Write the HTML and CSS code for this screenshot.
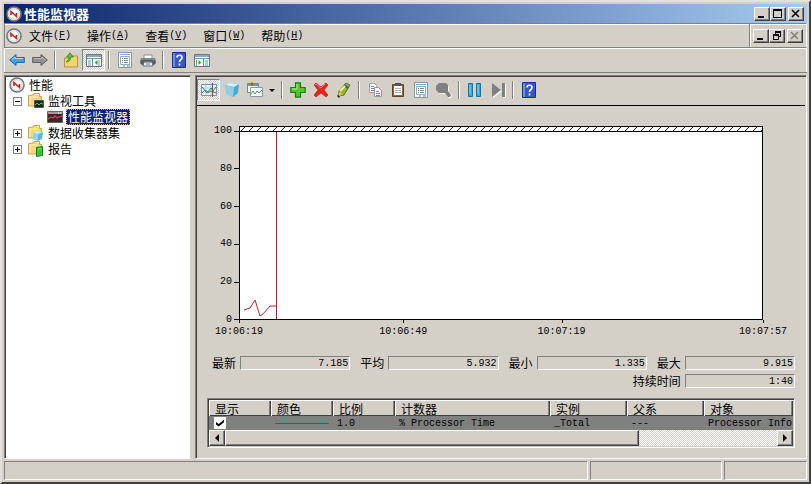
FILE: index.html
```html
<!DOCTYPE html>
<html lang="zh-CN">
<head>
<meta charset="utf-8">
<title>性能监视器</title>
<link rel="stylesheet" href="styles.css">
</head>
<body>
<svg class="sprite" aria-hidden="true">
  <symbol id="app" viewBox="0 0 16 16"><circle cx="8" cy="8" r="7" fill="#fff" stroke="#777" stroke-width="1.6"/><circle cx="8" cy="8" r="5.3" fill="none" stroke="#ccc"/><path d="M5 9V5.500l5.500 5V7" fill="none" stroke="#c8201c" stroke-width="1.6"/></symbol>
  <symbol id="back" viewBox="0 0 16 16"><path d="M.7 8 7 2.500V5.500h8.300v5H7v3z" fill="#39a5ec" stroke="#1c66a8"/><path d="M3 7.500 6 5v1.500h8" fill="none" stroke="#a7dcff"/></symbol>
  <symbol id="forward" viewBox="0 0 16 16"><path d="M15.300 8 9 2.500V5.500H.7v5H9v3z" fill="#929292" stroke="#5c5c5c"/><path d="M2 6.500h8V5l3 3" fill="none" stroke="#bbb"/></symbol>
  <symbol id="up" viewBox="0 0 16 16"><path d="M1.500 6h5l1-2h7v11h-13z" fill="#f5d471" stroke="#b8923b"/><path d="M3 10C6 10 8 8 8 5h2.500L7 .8 3.500 5H6C6 7 5 8.500 3 10z" fill="#55c32e" stroke="#28851b" stroke-width=".7"/></symbol>
  <symbol id="panel-left" viewBox="0 0 16 16"><path d="M.5 2.500h15v12H.5z" fill="#fff" stroke="#64788b"/><path d="M1 3h14v2H1z" fill="#8ea7bd"/><path d="M1 6.500h14M6.500 7v7M2 9h3M2 11h3M2 13h3M13 8v6" stroke="#7890a7"/><path d="m11.500 8-3 2.500 3 2.500z" fill="#38a333"/></symbol>
  <symbol id="panel-right" viewBox="0 0 16 16"><path d="M.5 2.500h15v12H.5z" fill="#fff" stroke="#64788b"/><path d="M1 3h14v2H1z" fill="#8ea7bd"/><path d="M1 6.500h14M9.500 7v7M11 9h3M11 11h3M11 13h3M2.500 8v6" stroke="#7890a7"/><path d="m4.500 8 3 2.500-3 2.500z" fill="#38a333"/></symbol>
  <symbol id="props" viewBox="0 0 16 16"><path d="M1.500.5h13v15h-13z" fill="#f7fbfd" stroke="#8b969e"/><path d="M3 2.500h10" stroke="#7cabc8"/><path d="M3.500 4.500h9v8h-9z" fill="#fff" stroke="#8eafc3"/><path d="M5 6.500h1m1 0h4M5 8.500h1m1 0h4M5 10.500h1m1 0h4M6 14h2m2 0h3" stroke="#758997"/></symbol>
  <symbol id="print" viewBox="0 0 16 16"><path d="M4 3h8v4H4z" fill="#fff" stroke="#8e8e8e"/><path d="M1 6h14l1 5-2 2H2l-2-2z" fill="#555e64"/><path d="M1 7h14" stroke="#a5acb0"/><path d="M4 10h8l1 4H3z" fill="#e7edf1" stroke="#65717a"/><path d="M6 12h4" stroke="#3c89bd"/><path d="M13 8h1" stroke="#6c6"/></symbol>
  <symbol id="help" viewBox="0 0 16 16"><path d="M1.500.5h13v15h-13z" fill="#3657c6" stroke="#1a3188"/><path d="M2 1h2v14H2z" fill="#6f8ee4"/><path d="M6 5.500C6 2.500 11 2.500 11 5.500 11 8 8.500 7.500 8.500 10M8.500 11.500v2" fill="none" stroke="#fff" stroke-width="1.700"/></symbol>
  <symbol id="folder" viewBox="0 0 16 16"><path d="M.5 2.500 5 2l1-1.500h5.500v3h2V13H.5z" fill="#f3d77c" stroke="#c7a54a"/><path d="M2 4h8M2 3v9" stroke="#fff2b8"/><path d="M9 1.500h2" stroke="#fff"/></symbol>
  <symbol id="tools" viewBox="0 0 16 16"><use href="#folder"/><path d="M6.500 7.500h9v7h-9z" fill="#192820" stroke="#4b5650"/><path d="m7 12 2-2 2 2 2-2 2 1" fill="none" stroke="#42cf4c"/></symbol>
  <symbol id="collector" viewBox="0 0 16 16"><use href="#folder"/><path d="m5 8 3-2 7 1-1 7-4 2-5-2z" fill="#62b8db"/><path d="m5 8 5 1 5-2-7-1z" fill="#c7f1ff"/><path d="m5 8 5 1v7l-5-2z" fill="#91d5ec"/></symbol>
  <symbol id="report" viewBox="0 0 16 16"><use href="#folder"/><path d="m8.500 6.500 6-1v9l-6 1z" fill="#35c938" stroke="#147d1a"/><path d="m10 8 3-.5" stroke="#92ef79"/></symbol>
  <symbol id="monitor" viewBox="0 0 16 16"><path d="M.5 2.500h15v11H.5z" fill="#3b2529" stroke="#62676b"/><path d="M1 3h14v2H1z" fill="#9ba0a4"/><path d="M11 4h1m1 0h1" stroke="#fff"/><path d="m1 10 3-2 2 1 2-2 2 2 2-1 3-1" fill="none" stroke="#ee3849" stroke-width="1.300"/></symbol>
  <symbol id="graph" viewBox="0 0 16 16"><path d="M.5 2.500h15v11H.5z" fill="#edf5f5" stroke="#7797ad"/><path d="M1 6h14M1 10h14M5 3v10M10 3v10" stroke="#b8c9d1"/><path d="m1 11 3-3 3 2 3-4 2 3 3-4" fill="none" stroke="#229947"/><path d="m1 5 5 6 4-2 5 2" fill="none" stroke="#4671bd"/><path d="M11.500 1v14" stroke="#c52d38"/></symbol>
  <symbol id="cube" viewBox="0 0 16 16"><path d="m1 3 4-2 10 1-1 9-5 4-6-3z" fill="#4ba8ca"/><path d="m1 3 4-2 10 1-5 3z" fill="#d2f4fc"/><path d="m1 3 9 2-1 10-6-3z" fill="#93cfe4"/></symbol>
  <symbol id="views" viewBox="0 0 16 16"><path d="M.5 1.500h11v9H.5z" fill="#fff" stroke="#6d88a1"/><path d="M1 2h10v2H1z" fill="#6794c8"/><path d="M4 2h2" stroke="#dc3a33" stroke-width="3"/><path d="M3.500 5.500h12v9h-12z" fill="#f6faff" stroke="#8498a8"/><path d="m4 12 2-3 2 3 2-3 2 2 3-3" fill="none" stroke="#4aa95b"/></symbol>
  <symbol id="plus" viewBox="0 0 16 16"><path d="M5.500.8h5v4.700h4.700v5h-4.700v4.700h-5v-4.700H.8v-5h4.700z" fill="#4fc62b" stroke="#167d19" stroke-width="1.200"/><path d="M7 2v5H2" fill="none" stroke="#b0f087"/></symbol>
  <symbol id="remove" viewBox="0 0 16 16"><path d="m1 3 2-2 5 4 5-4 2 2-4 5 4 5-2 2-5-4-5 4-2-2 4-5z" fill="#e5241d" stroke="#b01c19" stroke-width=".6"/><path d="m2 3 1-1 5 4 4-4" fill="none" stroke="#f77e75"/></symbol>
  <symbol id="pen" viewBox="0 0 16 16"><path d="m2 14 1-5 7-8 4 2-6 10z" fill="#93b52f" stroke="#60741b"/><path d="m8 3 4 3" stroke="#2d5d94" stroke-width="2"/><path d="m4 9 5-5" stroke="#edf49a" stroke-width="2"/><path d="m3 10 4 2-5 3z" fill="#e5c34c"/><path d="M2 13v2h2" stroke="#333"/></symbol>
  <symbol id="copy" viewBox="0 0 16 16"><path d="M2.500 1.500h5l2 2v7h-7z" fill="#fff" stroke="#9aa6ad"/><path d="M4 4.500h3m-3 2h4m-4 2h3" stroke="#698aac"/><path d="M7.500 5.500h4l3 3v6h-7z" fill="#fff" stroke="#8e999f"/><path d="M9 9.500h3m-3 2h4m-4 2h4" stroke="#698aac"/></symbol>
  <symbol id="paste" viewBox="0 0 16 16"><path d="M2.500 2.500h11v12h-11z" fill="#906338" stroke="#614321"/><path d="M4 4h8v9H4z" fill="#fff"/><path d="M5 1h6v3H5z" fill="#555"/><path d="M5 6.500h6m-6 2h6m-6 2h6" stroke="#aebbc3"/></symbol>
  <symbol id="zoom" viewBox="0 0 16 16"><path d="M4 2h6l3 3v5l3 3-1 3h-2l-3-4H4L1 9V5z" fill="#fff"/><path d="M3 1h7l2 2v6l3 4-1 2h-2l-3-4H3L0 8V4z" fill="#808080"/></symbol>
  <symbol id="pause" viewBox="0 0 16 16"><path d="M1.500 1.500h4v13h-4zM9.500 1.500h4v13h-4z" fill="#32a9df" stroke="#1970a9"/><path d="M3 3v9m8-9v9" stroke="#81d8f5"/></symbol>
  <symbol id="next" viewBox="0 0 16 16"><path d="m3 2 9 7-9 7zM13 2h3v14h-3z" fill="#fff"/><path d="m2 1 9 7-9 7zM12 1h3v14h-3z" fill="#808080"/></symbol>
  <symbol id="min" viewBox="0 0 12 10"><path d="M2 7h6v2H2z" fill="currentColor"/></symbol>
  <symbol id="max" viewBox="0 0 12 10"><path d="M1 0h9v9H1zM2 2v6h7V2z" fill="currentColor" fill-rule="evenodd"/></symbol>
  <symbol id="restore" viewBox="0 0 12 10"><path d="M4 0h6v6H8V5h1V2H5v1H4zM2 3h6v6H2zM3 5v3h4V5z" fill="currentColor" fill-rule="evenodd"/></symbol>
  <symbol id="close" viewBox="0 0 12 10"><path d="m2 1 7 7m0-7-7 7" stroke="currentColor" stroke-width="1.600"/></symbol>
</svg>
<div class="window">
  <header class="titlebar">
    <svg class="icon"><use href="#app"/></svg>
    <h1>性能监视器</h1>
    <div class="controls">
      <button class="ctl" aria-label="最小化"><svg><use href="#min"/></svg></button><button class="ctl" aria-label="最大化"><svg><use href="#max"/></svg></button><button class="ctl ctl-close" aria-label="关闭"><svg><use href="#close"/></svg></button>
    </div>
  </header>
  <nav class="menubar">
    <svg class="icon"><use href="#app"/></svg>
    <div class="menus">
      <button>文件<span class="latin">(<u>F</u>)</span></button>
      <button>操作<span class="latin">(<u>A</u>)</span></button>
      <button>查看<span class="latin">(<u>V</u>)</span></button>
      <button>窗口<span class="latin">(<u>W</u>)</span></button>
      <button>帮助<span class="latin">(<u>H</u>)</span></button>
    </div>
    <div class="controls controls-child">
      <button class="ctl" aria-label="最小化"><svg><use href="#min"/></svg></button><button class="ctl" aria-label="还原"><svg><use href="#restore"/></svg></button><button class="ctl ctl-close" aria-label="关闭" disabled><svg><use href="#close"/></svg></button>
    </div>
  </nav>
  <div class="toolbar toolbar-main">
    <button class="tool" aria-label="后退"><svg class="icon"><use href="#back"/></svg></button>
    <button class="tool" aria-label="前进"><svg class="icon"><use href="#forward"/></svg></button>
    <span class="sep"></span>
    <button class="tool" aria-label="上一级"><svg class="icon"><use href="#up"/></svg></button>
    <button class="tool pressed" aria-label="显示控制台树"><svg class="icon"><use href="#panel-left"/></svg></button>
    <span class="sep"></span>
    <button class="tool" aria-label="属性"><svg class="icon"><use href="#props"/></svg></button>
    <button class="tool" aria-label="打印"><svg class="icon"><use href="#print"/></svg></button>
    <span class="sep"></span>
    <button class="tool" aria-label="帮助"><svg class="icon"><use href="#help"/></svg></button>
    <button class="tool" aria-label="显示操作窗格"><svg class="icon"><use href="#panel-right"/></svg></button>
  </div>
  <div class="workspace">
    <aside class="tree">
      <ul>
        <li><div class="node"><svg class="icon"><use href="#app"/></svg><span class="name">性能</span></div>
          <ul class="branch">
            <li><div class="node"><button class="expander" aria-label="折叠"></button><svg class="icon"><use href="#tools"/></svg><span class="name">监视工具</span></div>
              <ul class="leaf"><li><div class="node"><svg class="icon"><use href="#monitor"/></svg><span class="name selected">性能监视器</span></div></li></ul>
            </li>
            <li><div class="node"><button class="expander closed" aria-label="展开"></button><svg class="icon"><use href="#collector"/></svg><span class="name">数据收集器集</span></div></li>
            <li><div class="node"><button class="expander closed" aria-label="展开"></button><svg class="icon"><use href="#report"/></svg><span class="name">报告</span></div></li>
          </ul>
        </li>
      </ul>
    </aside>
    <main class="monitor">
      <div class="toolbar toolbar-graph">
        <button class="tool pressed" aria-label="查看当前活动"><svg class="icon"><use href="#graph"/></svg></button>
        <button class="tool" aria-label="查看日志数据"><svg class="icon"><use href="#cube"/></svg></button>
        <button class="tool" aria-label="更改图形类型"><svg class="icon"><use href="#views"/></svg></button>
        <button class="drop" aria-label="图形类型"></button>
        <span class="sep"></span>
        <button class="tool" aria-label="添加"><svg class="icon"><use href="#plus"/></svg></button>
        <button class="tool" aria-label="删除"><svg class="icon"><use href="#remove"/></svg></button>
        <button class="tool" aria-label="突出显示"><svg class="icon"><use href="#pen"/></svg></button>
        <span class="sep"></span>
        <button class="tool" aria-label="复制属性"><svg class="icon"><use href="#copy"/></svg></button>
        <button class="tool" aria-label="粘贴计数器列表"><svg class="icon"><use href="#paste"/></svg></button>
        <button class="tool" aria-label="属性"><svg class="icon"><use href="#props"/></svg></button>
        <button class="tool" aria-label="缩放"><svg class="icon"><use href="#zoom"/></svg></button>
        <span class="sep"></span>
        <button class="tool" aria-label="冻结显示"><svg class="icon"><use href="#pause"/></svg></button>
        <button class="tool" aria-label="更新数据"><svg class="icon"><use href="#next"/></svg></button>
        <span class="sep"></span>
        <button class="tool" aria-label="帮助"><svg class="icon"><use href="#help"/></svg></button>
      </div>
      <div class="content">
        <section class="chart">
          <ul class="y-axis"><li>100</li><li>80</li><li>60</li><li>40</li><li>20</li><li>0</li></ul>
          <div class="plot">
            <svg class="hatch"><defs><pattern id="stripes" width="8" height="4" patternUnits="userSpaceOnUse"><path d="m1 4 4-4" stroke="#222"/></pattern></defs><rect width="100%" height="100%" fill="url(#stripes)"/></svg>
            <svg class="trace" viewBox="0 0 522 187" preserveAspectRatio="none"><path d="m4 178 6-2 5-8 5 16 3-2 7-8h6.500" fill="none" stroke="#b02b36" vector-effect="non-scaling-stroke"/><path d="M36.500 0v187" stroke="#b71d2c" vector-effect="non-scaling-stroke"/></svg>
          </div>
          <ul class="x-axis"><li>10:06:19</li><li>10:06:49</li><li>10:07:19</li><li>10:07:57</li></ul>
        </section>
        <section class="stats">
          <div class="stat"><label for="last">最新</label><input id="last" value="7.185" readonly></div>
          <div class="stat"><label for="avg">平均</label><input id="avg" value="5.932" readonly></div>
          <div class="stat"><label for="low">最小</label><input id="low" value="1.335" readonly></div>
          <div class="stat"><label for="high">最大</label><input id="high" value="9.915" readonly></div>
          <div class="stat duration"><label for="span">持续时间</label><input id="span" value="1:40" readonly></div>
        </section>
        <section class="legend">
          <table>
            <colgroup><col class="c-s"><col class="c-s"><col class="c-s"><col class="c-l"><col class="c-m"><col class="c-m"><col></colgroup>
            <thead><tr><th>显示</th><th>颜色</th><th>比例</th><th>计数器</th><th>实例</th><th>父系</th><th>对象</th></tr></thead>
            <tbody><tr><td><input type="checkbox" checked aria-label="显示 % Processor Time"></td><td><span class="swatch"></span></td><td>1.0</td><td>% Processor Time</td><td>_Total</td><td>---</td><td>Processor Infor</td></tr></tbody>
          </table>
          <div class="scroll"><button class="arrow left" aria-label="向左滚动"></button><div class="track"><div class="thumb"></div></div><button class="arrow right" aria-label="向右滚动"></button></div>
        </section>
      </div>
    </main>
  </div>
  <footer class="status"><div></div><div></div><div></div></footer>
</div>
</body>
</html>
```
FILE: styles.css
```css
* { box-sizing: border-box; }
body {
  margin: 0;
  background: #d4d0c8;
  color: #000;
  font: 12px/16px "Noto Sans CJK SC", sans-serif;
}
button {
  margin: 0;
  padding: 0;
  border: 0;
  background: none;
  color: inherit;
  font: inherit;
}
ul { margin: 0; padding: 0; list-style: none; }
.sprite { position: absolute; width: 0; height: 0; }
.icon { display: block; flex: none; width: 16px; height: 16px; }
.latin, .chart, .stat input, td { font-family: "Liberation Mono", monospace; font-size: 10px; }

.window {
  display: flex;
  flex-direction: column;
  height: 100vh;
  padding: 2px;
  border: 2px solid;
  border-color: #e4e1dc #404040 #404040 #e4e1dc;
  background: #d4d0c8;
}
.titlebar {
  display: flex;
  flex: none;
  align-items: center;
  height: 19px;
  padding: 0 3px 0 2px;
  gap: 2px;
  background: linear-gradient(90deg, #0a246a, #a6caf0);
  color: #fff;
}
.titlebar h1 { flex: 1; margin: 0; font-size: 13px; line-height: 18px; }
.controls { display: flex; align-items: center; }
.ctl {
  display: flex;
  width: 16px;
  height: 14px;
  border: 1px solid;
  border-color: #fff #404040 #404040 #fff;
  box-shadow: inset -1px -1px #808080;
  background: #d4d0c8;
  color: #000;
  padding: 1px;
}
.ctl svg { width: 12px; height: 10px; }
.ctl-close { margin-left: 2px; }
.ctl:disabled { color: #808080; }

.menubar {
  display: flex;
  flex: none;
  align-items: center;
  height: 25px;
  padding-left: 1px;
  border: 1px solid;
  border-color: #808080 #fff #808080 #808080;
  box-shadow: inset 0 1px #fff;
}
.menus { display: flex; flex: 1; padding-right: 8px; }
.menus button { display: flex; padding: 0 9px 0 7px; white-space: nowrap; }
.menus u { text-underline-offset: 1px; }
.controls-child { align-self: stretch; padding: 0 3px; border-left: 1px solid #808080; box-shadow: inset 1px 0 #fff; }

.toolbar { display: flex; flex: none; align-items: center; }
.toolbar-main { height: 25px; padding: 0 1px; border-bottom: 1px solid #808080; box-shadow: inset 1px 1px #fff, inset -1px 0 #fff; }
.tool { display: flex; align-items: center; justify-content: center; width: 23px; height: 22px; }
.pressed {
  border: 1px solid;
  border-color: #808080 #fff #fff #808080;
  background: repeating-conic-gradient(#fff 0 25%, #d4d0c8 0 50%) 0 0 / 2px 2px;
}
.sep { width: 2px; height: 18px; margin: 0 3px; border-left: 1px solid #808080; border-right: 1px solid #fff; }
.drop { display: flex; justify-content: center; width: 12px; }
.drop::before { content: ""; border: 3px solid transparent; border-top-color: #000; border-bottom: 0; }

.workspace { display: grid; flex: 1; grid-template-columns: 187fr 612fr; gap: 4px; min-height: 0; margin-top: 2px; }
.tree, .monitor {
  min-width: 0;
  border: 1px solid;
  border-color: #808080 #fff #fff #808080;
  box-shadow: inset 1px 1px #404040;
}
.tree { padding: 1px 4px; background: #fff; border-right-color: #d4d0c8; }
.node { display: flex; align-items: center; height: 16px; gap: 3px; white-space: nowrap; }
.name { padding: 0 1px; line-height: 16px; }
.selected { padding: 0 2px; outline: 1px dotted #c8b060; outline-offset: -1px; background: #0a246a; color: #fff; }
.branch { padding-left: 4px; }
.leaf { padding-left: 34px; }
.expander {
  width: 9px;
  height: 9px;
  margin-right: 3px;
  border: 1px solid #808080;
  background: linear-gradient(#000, #000) center / 5px 1px no-repeat;
}
.closed {
  background: linear-gradient(#000, #000) center / 5px 1px no-repeat, linear-gradient(#000, #000) center / 1px 5px no-repeat;
}

.monitor { display: flex; flex-direction: column; padding: 1px; }
.toolbar-graph { height: 29px; border-bottom: 1px solid #000; padding-bottom: 2px; }
.content { display: flex; flex: 1; flex-direction: column; min-height: 0; padding: 19px 10px 9px 10px; }
.chart {
  display: grid;
  flex: 1;
  grid-template: minmax(0, 1fr) 12px / 26px minmax(0, 1fr);
  row-gap: 1px;
  padding: 0 32px 0 6px;
  line-height: 12px;
}
.y-axis { display: flex; flex-direction: column; justify-content: space-between; margin-bottom: -1px; text-align: right; }
.y-axis li { display: flex; align-items: center; justify-content: flex-end; gap: 2px; }
.y-axis li::after { content: ""; width: 5px; height: 1px; background: #000; }
.plot { display: flex; flex-direction: column; margin: 1px 0 5px; border: 1px solid #000; background: #fff; }
.hatch { display: block; width: 100%; height: 5px; border-bottom: 1px solid #000; }
.trace { display: block; flex: 1; width: 100%; min-height: 0; }
.x-axis { display: grid; grid-column: 2; grid-template-columns: 164fr 158fr 201fr 48px; margin: 0 -24px; }
.x-axis li { position: relative; }
.x-axis li::before { position: absolute; top: -6px; left: 24px; width: 1px; height: 3px; background: #000; content: ""; }

.stats { display: grid; flex: none; grid-template-columns: repeat(4, minmax(0, 1fr)); gap: 4px 10px; margin: 18px 0 10px 5px; }
.stat { display: flex; align-items: center; height: 14px; gap: 4px; white-space: nowrap; }
.duration { grid-column: 4; margin-left: -24px; }
.stat input {
  flex: 1;
  width: 0;
  min-width: 0;
  height: 14px;
  margin: 0;
  padding: 0 1px;
  border: 1px solid;
  border-color: #808080 #fff #fff #808080;
  background: none;
  color: #000;
  line-height: 12px;
  text-align: right;
}

.legend { flex: none; overflow: hidden; border: 1px solid; border-color: #808080 #fff #fff #808080; box-shadow: inset 1px 1px #404040; padding: 1px; }
table { width: 100%; table-layout: fixed; border-collapse: collapse; }
.c-s { width: 62px; }
.c-m { width: 77px; }
.c-l { width: 155px; }
th, td { overflow: hidden; padding: 0; text-align: left; white-space: nowrap; }
th { height: 16px; padding-left: 6px; box-shadow: inset 1px 1px #fff, inset -1px -1px #404040, inset -2px 0 #808080; font-weight: 400; line-height: 15px; }
td { height: 14px; padding-left: 4px; background: #808080; line-height: 13px; }
td input {
  display: grid;
  place-items: center;
  width: 12px;
  height: 12px;
  margin: 0 0 0 1px;
  appearance: none;
  background: #fff;
}
td input:checked::before { width: 8px; height: 7px; background: #000; clip-path: polygon(0 35%, 35% 65%, 100% 0, 100% 38%, 35% 100%, 0 70%); content: ""; }
.swatch { display: block; width: 54px; height: 1px; background: #d81818; }
.scroll { display: flex; height: 16px; }
.arrow, .thumb { border: 1px solid; border-color: #fff #404040 #404040 #fff; box-shadow: inset -1px -1px #808080; background: #d4d0c8; }
.arrow { display: flex; flex: none; align-items: center; justify-content: center; width: 16px; }
.arrow::before { border: 4px solid transparent; content: ""; }
.left::before { border-right-color: #000; border-left: 0; }
.right::before { border-left-color: #000; border-right: 0; }
.track { display: flex; flex: 1; background: repeating-conic-gradient(#fff 0 25%, #d4d0c8 0 50%) 0 0 / 2px 2px; }
.thumb { width: 75%; }

.status { display: grid; flex: none; grid-template-columns: 583fr 131fr 83fr; gap: 2px; height: 19px; margin-top: 2px; }
.status div { border: 1px solid; border-color: #808080 #fff #fff #808080; }
```
